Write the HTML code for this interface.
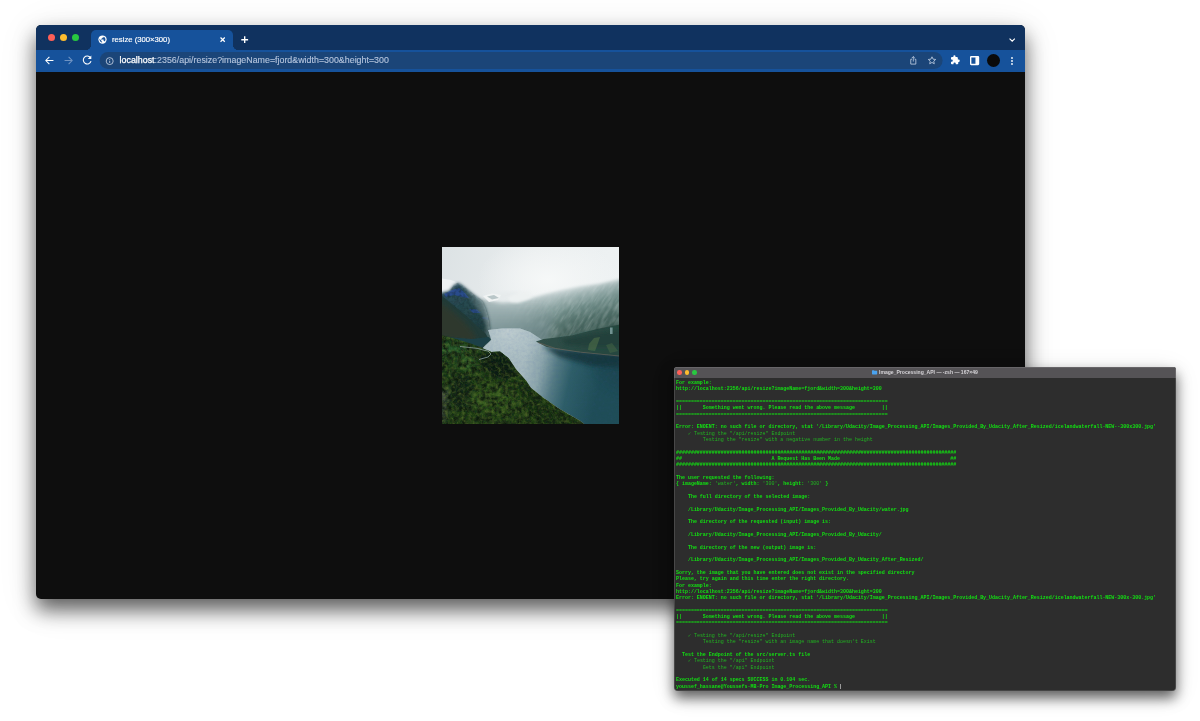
<!DOCTYPE html>
<html lang="en">
<head>
<meta charset="utf-8">
<title>resize (300×300)</title>
<style>
*{box-sizing:border-box;margin:0;padding:0}
html,body{width:1200px;height:721px;overflow:hidden;background:#fff}
body{position:relative;font-family:"Liberation Sans",sans-serif}
.browser{position:absolute;left:36px;top:25px;width:989px;height:573.5px;border-radius:5px;background:#0e0e0e;
 box-shadow:0 11px 20px rgba(0,0,0,.6),0 6px 40px rgba(0,0,0,.1)}
.clip{position:absolute;inset:0;border-radius:5px;overflow:hidden}
.tabbar{position:absolute;left:0;top:0;width:100%;height:24.5px;background:#10325f}
.toolbar{position:absolute;left:0;top:24.5px;width:100%;height:22.5px;background:#16529b}
.dot{position:absolute;top:9.3px;width:7px;height:7px;border-radius:50%}
.tab{position:absolute;left:55.2px;top:5.2px;width:141.4px;height:19.5px;background:#16529b;border-radius:5px 5px 0 0}
.tab:before,.tab:after{content:"";position:absolute;bottom:0;width:5px;height:5px;background:radial-gradient(circle at 0 0,rgba(22,82,155,0) 4.8px,#16529b 5.2px)}
.tab:before{left:-5px}
.tab:after{right:-5px;background:radial-gradient(circle at 100% 0,rgba(22,82,155,0) 4.8px,#16529b 5.2px)}
.ttitle{position:absolute;left:20.6px;top:5.9px;font-size:7.1px;line-height:9px;transform:scaleX(1.0845);transform-origin:0 0;color:#fff;white-space:nowrap;letter-spacing:0;-webkit-text-stroke:0.15px #fff}
.omni{position:absolute;left:63px;transform:translateX(0.6px);top:2.7px;width:843.3px;height:16.9px;border-radius:8.45px;background:#1b4578}
.url{position:absolute;left:20.2px;top:4.25px;font-size:8.2px;line-height:10px;transform:scaleX(1.0825);transform-origin:0 0;color:#b4c4dc;white-space:nowrap}
.url b{color:#fff;font-weight:normal;-webkit-text-stroke:0.25px #fff}
.url span{-webkit-text-stroke:0.12px #b4c4dc}
svg.ic{position:absolute;overflow:visible}
.photo{position:absolute;left:406px;top:222px;width:177px;height:177px;display:block}

.term{position:absolute;left:674px;top:367px;width:502px;height:323.5px;border-radius:2.5px 2.5px 4px 4px;background:#2d2d2d;
 box-shadow:0 7px 13px rgba(0,0,0,.6),0 4px 26px rgba(0,0,0,.1)}
.tclip:after{content:"";position:absolute;inset:0;border-radius:2.5px 2.5px 4px 4px;box-shadow:inset 0 0 0 0.6px rgba(255,255,255,.22);pointer-events:none}
.tclip{position:absolute;inset:0;border-radius:2.5px 2.5px 4px 4px;overflow:hidden}
.tbar{position:absolute;left:0;top:0;width:100%;height:10.5px;background:#555356}
.tdot{position:absolute;top:3px;width:4.6px;height:4.6px;border-radius:50%}
.ttl{position:absolute;left:205px;top:2.4px;font-size:5.07px;line-height:6px;font-weight:bold;color:#d6d4d8;white-space:nowrap}
.tbody{position:absolute;left:2.2px;top:12.9px;font-family:"Liberation Mono",monospace;font-size:4.975px;line-height:6.336px;color:#12e012;font-weight:bold}
.l{height:6.336px;white-space:pre}
.tbody,.ttl{will-change:transform}
.l.d{color:#21b321;font-weight:normal}
.l i{font-style:normal;color:#21b321;font-weight:normal}
.l b{font-weight:bold}
.l u{position:relative;text-decoration:none}
.l u:after{content:"";position:absolute;left:0.2px;top:-0.2px;width:0.7px;height:5.8px;background:#9a9a9a}
</style>
</head>
<body>
<div class="browser">
 <div class="clip">
  <div class="tabbar">
   <span class="dot" style="left:12.3px;background:#fe5f57"></span>
   <span class="dot" style="left:24.1px;background:#febc2e"></span>
   <span class="dot" style="left:35.9px;background:#28c840"></span>
   <div class="tab">
    <svg class="ic" style="left:6.5px;top:5.1px" width="9" height="9" viewBox="0 0 24 24"><circle cx="12" cy="12" r="11" fill="#fff"/><path fill="#16529b" d="M11 19.9c-3.9-.5-7-3.9-7-7.9 0-.6.1-1.2.2-1.8L9 15v1c0 1.1.9 2 2 2v1.9zM17.9 17.4c-.3-.8-1-1.4-1.9-1.4h-1v-3c0-.6-.4-1-1-1H8v-2h2c.6 0 1-.4 1-1V7h2c1.1 0 2-.9 2-2v-.4c2.9 1.2 5 4.1 5 7.4 0 2.1-.8 4-2.1 5.4z"/></svg>
    <div class="ttitle">resize (300×300)</div>
    <svg class="ic" style="left:128.900px;top:6.900px" width="5.300" height="5.300" viewBox="0 0 6 6"><path d="M0.6 0.6L5.4 5.4M5.4 0.6L0.6 5.4" stroke="#fff" stroke-width="1.4" fill="none"/></svg>
   </div>
   <svg class="ic" style="left:205px;top:11.2px" width="7.4" height="7.4" viewBox="0 0 8 8"><path d="M4 0.3V7.7M0.3 4H7.7" stroke="#fff" stroke-width="1.5" fill="none"/></svg>
   <svg class="ic" style="left:973px;top:13px" width="6.4" height="4" viewBox="0 0 8 5"><path d="M0.7 0.7L4 4L7.3 0.7" stroke="#fff" stroke-width="1.4" fill="none"/></svg>
  </div>
  <div class="toolbar">
   <svg class="ic" style="left:8.6px;top:6.9px" width="9" height="9" viewBox="0 0 16 16"><path d="M15 8H2M7.800 1.500L1.500 8L7.800 14.500" stroke="#fff" stroke-width="1.9" fill="none"/></svg>
   <svg class="ic" style="left:27.9px;top:6.9px" width="9" height="9" viewBox="0 0 16 16"><path d="M1 8H14M8.200 1.500L14.500 8L8.200 14.500" stroke="#6f93c3" stroke-width="1.9" fill="none"/></svg>
   <svg class="ic" style="left:45.6px;top:5.9px" width="10.2" height="10.2" viewBox="0 0 16 16"><path d="M13.3 4.2A6.2 6.2 0 1 0 14.2 9.6" stroke="#fff" stroke-width="1.700" fill="none"/><path d="M14.6 0.8V6.4H9z" fill="#fff"/></svg>
   <div class="omni">
    <svg class="ic" style="left:6.4px;top:4.35px" width="8.2" height="8.2" viewBox="0 0 16 16"><circle cx="8" cy="8" r="6.8" stroke="#d7e0ee" stroke-width="1.5" fill="none"/><path d="M8 7.2V11.6M8 4.3V5.9" stroke="#d7e0ee" stroke-width="1.6" fill="none"/></svg>
    <div class="url"><b>localhost</b><span>:2356/api/resize?imageName=fjord&amp;width=300&amp;height=300</span></div>
    <svg class="ic" style="left:810.3px;top:3.6px" width="7.4" height="8.8" viewBox="0 0 16 19"><path d="M5 7H2.5V17.5H13.5V7H11M8 12V1.5M4.6 4.6L8 1.2L11.4 4.6" stroke="#c9d6e8" stroke-width="1.7" fill="none"/></svg>
    <svg class="ic" style="left:828.4px;top:3.9px" width="8.8" height="8.4" viewBox="0 0 20 19"><path d="M10 1.8L12.5 7.2L18.4 7.8L14 11.8L15.2 17.6L10 14.6L4.8 17.6L6 11.8L1.6 7.8L7.5 7.2Z" stroke="#c9d6e8" stroke-width="1.8" fill="none" stroke-linejoin="round"/></svg>
   </div>
   <svg class="ic" style="left:915.1px;top:6.7px" width="9" height="9" viewBox="0 0 20 20"><path fill="#fff" d="M17.5 9.5H16V6c0-1.1-.9-2-2-2h-3.500V2.5a2.500 2.500 0 0 0-5 0V4H2C.9 4 0 4.900 0 6v3.800h1.500a2.700 2.700 0 0 1 0 5.400H0V19c0 1.100.9 2 2 2h3.800v-1.500a2.700 2.700 0 0 1 5.400 0V21H15c1.100 0 2-.9 2-2v-3.500h.5a3 3 0 0 0 0-6z" transform="translate(0,-1.5) scale(.95)"/></svg>
   <svg class="ic" style="left:933.9px;top:6.7px" width="9.2" height="9.2" viewBox="0 0 16 16"><rect x="1.200" y="1.200" width="13.600" height="13.600" rx="0.8" fill="none" stroke="#fff" stroke-width="2.4"/><rect x="9.500" y="2" width="5" height="12" fill="#fff"/></svg>
   <span style="position:absolute;left:950.7px;top:4.6px;width:13px;height:13px;border-radius:50%;background:#0a0a0a"></span>
   <svg class="ic" style="left:975.1px;top:7.2px" width="2" height="8" viewBox="0 0 2 8"><circle cx="1" cy="1" r="0.9" fill="#fff"/><circle cx="1" cy="4" r="0.9" fill="#fff"/><circle cx="1" cy="7" r="0.9" fill="#fff"/></svg>
  </div>
  <svg class="photo" viewBox="0 0 177 177" width="177" height="177">
<defs>
 <linearGradient id="sky" x1="0" y1="0" x2="1" y2="0.25"><stop offset="0" stop-color="#dce2e4"/><stop offset="0.5" stop-color="#e9edee"/><stop offset="1" stop-color="#eef2f3"/></linearGradient>
 <radialGradient id="skyglow" cx="0.6" cy="0.3" r="0.4"><stop offset="0" stop-color="#f6f8f8"/><stop offset="1" stop-color="#f6f8f8" stop-opacity="0"/></radialGradient>
 <linearGradient id="rmt" gradientUnits="userSpaceOnUse" x1="128" y1="36" x2="142" y2="90"><stop offset="0" stop-color="#e4eaeb"/><stop offset="0.1" stop-color="#ccd7d8"/><stop offset="0.26" stop-color="#97adac"/><stop offset="0.46" stop-color="#6e8b87"/><stop offset="0.7" stop-color="#4e6c66"/><stop offset="1" stop-color="#35534c"/></linearGradient>
 <linearGradient id="mist" gradientUnits="userSpaceOnUse" x1="44" y1="0" x2="125" y2="0"><stop offset="0" stop-color="#9fb2b4" stop-opacity="0.95"/><stop offset="0.4" stop-color="#a2b5b6" stop-opacity="0.7"/><stop offset="1" stop-color="#a2b5b6" stop-opacity="0"/></linearGradient>
 <linearGradient id="mdk" gradientUnits="userSpaceOnUse" x1="0" y1="56" x2="0" y2="84"><stop offset="0" stop-color="#6f888b" stop-opacity="0"/><stop offset="1" stop-color="#6a8487" stop-opacity="0.6"/></linearGradient>
 <linearGradient id="lmt" x1="0" y1="0" x2="0.5" y2="1"><stop offset="0" stop-color="#33566a"/><stop offset="0.4" stop-color="#294a52"/><stop offset="1" stop-color="#1f3d3e"/></linearGradient>
 <linearGradient id="lmist" gradientUnits="userSpaceOnUse" x1="28" y1="62" x2="50" y2="54"><stop offset="0" stop-color="#93a8ab" stop-opacity="0"/><stop offset="1" stop-color="#9db1b3" stop-opacity="0.95"/></linearGradient>
 <linearGradient id="water" gradientUnits="userSpaceOnUse" x1="85" y1="100" x2="162" y2="118"><stop offset="0" stop-color="#a7babf"/><stop offset="0.22" stop-color="#8da6ac"/><stop offset="0.42" stop-color="#547a83"/><stop offset="0.62" stop-color="#2e5e68"/><stop offset="1" stop-color="#1f4d57"/></linearGradient>
 <radialGradient id="wtop" gradientUnits="userSpaceOnUse" cx="66" cy="84" r="42" gradientTransform="translate(66 84) scale(1 0.85) translate(-66 -84)"><stop offset="0" stop-color="#bfcdd0" stop-opacity="0.98"/><stop offset="0.5" stop-color="#b5c6ca" stop-opacity="0.65"/><stop offset="1" stop-color="#b0c2c6" stop-opacity="0"/></radialGradient>
 <linearGradient id="pen" x1="0" y1="0" x2="1" y2="0.3"><stop offset="0" stop-color="#33514a"/><stop offset="1" stop-color="#25463f"/></linearGradient>
 <linearGradient id="fg" x1="0" y1="0" x2="0.6" y2="1"><stop offset="0" stop-color="#234623"/><stop offset="0.5" stop-color="#26431b"/><stop offset="1" stop-color="#2a461a"/></linearGradient>
 <filter id="b1" x="-10%" y="-10%" width="120%" height="120%"><feGaussianBlur stdDeviation="0.7"/></filter>
 <filter id="b15" x="-10%" y="-10%" width="120%" height="120%"><feGaussianBlur stdDeviation="1.4"/></filter>
 <filter id="b2" x="-20%" y="-20%" width="140%" height="140%"><feGaussianBlur stdDeviation="2.2"/></filter>
 <filter id="b4" x="-30%" y="-30%" width="160%" height="160%"><feGaussianBlur stdDeviation="5"/></filter>
 <filter id="tex" x="0" y="0" width="100%" height="100%">
  <feTurbulence type="fractalNoise" baseFrequency="0.2" numOctaves="3" seed="7" result="n"/>
  <feColorMatrix in="n" type="matrix" values="0 0 0 0 0  0 0 0 0 0  0 0 0 0 0  1.8 1.4 0 0 -1.12" result="a"/>
  <feComposite in="SourceGraphic" in2="a" operator="in"/>
 </filter>
 <filter id="tex2" x="0" y="0" width="100%" height="100%">
  <feTurbulence type="fractalNoise" baseFrequency="0.3" numOctaves="3" seed="23" result="n"/>
  <feColorMatrix in="n" type="matrix" values="0 0 0 0 0  0 0 0 0 0  0 0 0 0 0  1.6 1.2 0 0 -1.24" result="a"/>
  <feComposite in="SourceGraphic" in2="a" operator="in"/>
 </filter>
 <filter id="tex3" x="0" y="0" width="100%" height="100%">
  <feTurbulence type="fractalNoise" baseFrequency="0.09 0.35" numOctaves="2" seed="3" result="n"/>
  <feColorMatrix in="n" type="matrix" values="0 0 0 0 0  0 0 0 0 0  0 0 0 0 0  1.5 1.0 0 0 -1.0" result="a"/>
  <feComposite in="SourceGraphic" in2="a" operator="in"/>
 </filter>
 <filter id="tex4" x="0" y="0" width="100%" height="100%">
  <feTurbulence type="fractalNoise" baseFrequency="0.35" numOctaves="2" seed="11" result="n"/>
  <feColorMatrix in="n" type="matrix" values="0 0 0 0 0  0 0 0 0 0  0 0 0 0 0  1.4 1.2 0 0 -1.1" result="a"/>
  <feComposite in="SourceGraphic" in2="a" operator="in"/>
 </filter>
 <clipPath id="cp"><rect width="177" height="177"/></clipPath>
 <clipPath id="fgc"><path d="M-5 87 L14 92 L30 97 L40.700 101.300 L49.400 105 L58 104.400 L66.700 111.200 L74 122.300 L84 133.400 L89 141 L101 150.500 L116 161 L138.400 174 L143.300 178 L150 185 L-5 185Z"/></clipPath>
 <clipPath id="rmc"><path d="M200 26 L177 32.500 L157 37 L138 39.500 L120 43 L101 48 L89 52 L75 56 L60 59 L44 61 L44 110 L200 115Z"/></clipPath>
 <clipPath id="lmc"><path d="M-10 48 L7 44 L12 38 L16 35.800 L20 38 L31 47 L40.700 54.300 L44.500 64 L47 74 L48 84 L49.400 92.700 L40.700 101.300 L-10 92Z"/></clipPath>
 <clipPath id="wc"><path d="M46.200 83 L60 81.500 L78 81.500 L88 85 L101.600 93.700 L94 94.500 L104.800 100 L113.700 101.300 L138.400 105 L178 108.800 L178 178 L143.300 178 L138.400 174 L116 161 L101 150.500 L89 141 L84 133.400 L74 122.300 L66.700 111.200 L58 104.400 L49.400 105 L40.700 101.300 L49.400 92.700Z"/></clipPath>
</defs>
<g clip-path="url(#cp)">
 <rect width="177" height="177" fill="url(#sky)"/>
 <rect width="177" height="110" fill="url(#skyglow)"/>
 <!-- right mountain -->
 <path d="M200 26 L177 32.500 L157 37 L138 39.500 L120 43 L101 48 L89 52 L75 56 L60 59 L44 61 L44 110 L200 115Z" fill="url(#rmt)" filter="url(#b15)"/>
 <g clip-path="url(#rmc)" opacity="0.3">
  <g transform="rotate(-58 120 60)"><rect x="20" y="-40" width="220" height="220" fill="#dbe4e4" filter="url(#tex3)"/></g>
 </g>
 <path d="M40 52 L60 56 L89 52 L112 46 L135 46 L135 100 L40 100Z" fill="url(#mist)" filter="url(#b2)"/>
 <path d="M40 56 L70 58 L100 56 L112 70 L104 96 L40 96Z" fill="url(#mdk)" filter="url(#b2)"/>
 <ellipse cx="64" cy="49" rx="22" ry="4" fill="#e6ebec" filter="url(#b2)"/>
 <path d="M41 49 L50 46.500 L59 48 L56 53 L47 55Z" fill="#f1f4f4" filter="url(#b1)" opacity="0.95"/>
 <path d="M66 50 L78 45 L89 44 L89 51 L76 56 L68 55Z" fill="#eef2f2" filter="url(#b15)" opacity="0.9"/>
 <path d="M45 49.500 L52 48 L57 51 L50 52.500Z" fill="#a3b4b6" filter="url(#b1)" opacity="0.7"/>
 <!-- left snow peak -->
 <path d="M-10 30 L9 33 L16 35.800 L21 41 L10 47.500 L-10 53Z" fill="#eff2f3" filter="url(#b1)"/>
 <!-- left mountain -->
 <path d="M-10 48 L7 44 L12 38 L16 35.800 L20 38 L31 47 L40.700 54.300 L44.500 64 L47 74 L48 84 L49.400 92.700 L40.700 101.300 L-10 92Z" fill="url(#lmt)" filter="url(#b15)"/>
 <g clip-path="url(#lmc)">
  <path d="M2 47 L10 43 L17 41 L23 46 L27 51 L20 50 L12 48 L4 50Z" fill="#2a4cae" opacity="0.6" filter="url(#b1)"/>
  <path d="M27 62 L35 62.500 L39 66 L31 66Z" fill="#2a4cae" opacity="0.55" filter="url(#b1)"/>
  <path d="M40 70 L48 71 L49 73 L41 72Z" fill="#2a4cae" opacity="0.35" filter="url(#b1)"/>
  <rect x="0" y="34" width="56" height="70" fill="#14292c" filter="url(#tex4)" opacity="0.55"/>
  <path d="M14 32 L24 38 L34 46 L44 54 L51 64 L57 76 L58 90 L40 96 L44 80 L40 68 L30 56 L20 46Z" fill="url(#lmist)" filter="url(#b15)"/>
 </g>
 <!-- lower-left dark ridge -->
 <path d="M-10 46 L0 49 L10 57 L24.700 69 L34 78 L43 86 L47 92 L40.700 101.300 L-10 92Z" fill="#203b38" filter="url(#b1)"/>
 <path d="M-5 54 L8 62 L22 74 L32 86 L36 97 L-5 90Z" fill="#30392c" opacity="0.75" filter="url(#b2)"/>
 <path d="M4 90 L30 92 L47 90 L49 93 L40 100 L14 94Z" fill="#1b4146" filter="url(#b1)"/>
 <!-- water -->
 <g clip-path="url(#wc)">
  <rect x="40" y="80" width="140" height="100" fill="url(#water)"/>
  <rect x="20" y="40" width="100" height="90" fill="url(#wtop)"/>
  <path d="M100 99 L125 103 L155 106 L200 109 L200 124 L150 119 L118 110Z" fill="#12343b" opacity="0.85" filter="url(#b2)"/>
  <path d="M150 122 L200 116 L200 150 L170 140Z" fill="#1a454f" opacity="0.6" filter="url(#b4)"/>
  <rect x="40" y="80" width="140" height="100" fill="#3c56a8" filter="url(#tex4)" opacity="0.1"/>
 </g>
 <!-- right peninsula -->
 <path d="M94 94.500 L101.600 92 L114.300 90.500 L129.700 88.500 L155 82 L190 75 L190 110 L138.400 105 L113.700 101.300 L104.800 100Z" fill="url(#pen)" filter="url(#b1)"/>
 <path d="M118 93 L150 87 L200 80 L200 100 L150 100 L125 98Z" fill="#21413b" filter="url(#b2)"/>
 <path d="M147 97 L152 91 L158 90 L156 96 L153 104 L146 103Z" fill="#56764a" opacity="0.5" filter="url(#b1)"/>
 <path d="M164 98 L170 96 L176 104 L168 106Z" fill="#56764a" opacity="0.35" filter="url(#b1)"/>
 <path d="M96 95.500 L113.700 101.500 L138.400 105.200 L177 109" stroke="#6b6258" stroke-width="0.9" fill="none" opacity="0.75"/>
 <rect x="168" y="80.500" width="2.600" height="6.500" fill="#7fa0a0" opacity="0.85" filter="url(#b1)"/>
 <!-- foreground forest -->
 <path d="M-5 87 L14 92 L30 97 L40.700 101.300 L49.400 105 L58 104.400 L66.700 111.200 L74 122.300 L84 133.400 L89 141 L101 150.500 L116 161 L138.400 174 L143.300 178 L150 185 L-5 185Z" fill="url(#fg)"/>
 <g clip-path="url(#fgc)">
  <path d="M36 108 L52 105.500 L60 107 L69 116 L73 128 L62 133 L48 127 L39 118Z" fill="#0d1a14" filter="url(#b15)"/>
  <path d="M10 132 L24 128 L32 140 L30 160 L16 164 L8 150Z" fill="#16271a" filter="url(#b2)" opacity="0.9"/>
  <path d="M72 132 L84 138 L98 152 L112 164 L132 176 L100 185 L86 160Z" fill="#1a3418" filter="url(#b2)"/>
  <ellipse cx="50" cy="152" rx="24" ry="12" fill="#3a5f24" filter="url(#b4)"/>
  <ellipse cx="10" cy="102" rx="14" ry="6" fill="#2f6230" filter="url(#b2)"/>
  <ellipse cx="24" cy="116" rx="12" ry="7" fill="#35602a" filter="url(#b2)"/>
  <path d="M-6 142 L5 140 L8 152 L5 172 L-6 180Z" fill="#454b45" filter="url(#b2)" opacity="0.85"/>
  <rect x="0" y="86" width="150" height="92" fill="#0d1d0e" filter="url(#tex)"/>
  <rect x="0" y="86" width="150" height="92" fill="#60782c" filter="url(#tex2)" opacity="0.62"/>
 </g>
 <!-- road -->
 <path d="M18 99.500 L28 100.500 L36 101.500 L41 103 L46 104 L49 107 L46 110 L37 112.500" stroke="#8fa3a3" stroke-width="0.9" fill="none" opacity="0.85"/>
</g>
</svg>

 </div>
</div>

<div class="term">
 <div class="tclip">
  <div class="tbar">
   <span class="tdot" style="left:3.1px;background:#fe5f57"></span>
   <span class="tdot" style="left:10.7px;background:#febc2e"></span>
   <span class="tdot" style="left:18.4px;background:#28c840"></span>
   <svg class="ic" style="left:198px;top:2.8px" width="5.2" height="4.6" viewBox="0 0 11 9"><path d="M0 1.2C0 .5.5 0 1.200 0H4L5.200 1.200H9.800C10.500 1.200 11 1.700 11 2.400V7.800C11 8.500 10.500 9 9.800 9H1.200C.5 9 0 8.500 0 7.800Z" fill="#4aa3f0"/></svg>
   <div class="ttl">Image_Processing_API — -zsh — 167×49</div>
  </div>
  <div class="tbody">
<div class="l b">For example:</div>
<div class="l b">http://localhost:2356/api/resize?imageName=fjord&amp;width=300&amp;height=300</div>
<div class="l b"> </div>
<div class="l b">=======================================================================</div>
<div class="l b">||       Something went wrong. Please read the above message         ||</div>
<div class="l b">=======================================================================</div>
<div class="l b"> </div>
<div class="l b">Error: ENOENT: no such file or directory, stat '/Library/Udacity/Image_Processing_API/Images_Provided_By_Udacity_After_Resized/icelandwaterfall-NEW--300x300.jpg'</div>
<div class="l d">    <b>✓</b> Testing the "/api/resize" Endpoint</div>
<div class="l d">         Testing the "resize" with a negative number in the height</div>
<div class="l b"> </div>
<div class="l b">##############################################################################################</div>
<div class="l b">##                              A Request Has Been Made                                     ##</div>
<div class="l b">##############################################################################################</div>
<div class="l b"> </div>
<div class="l b">The user requested the following:</div>
<div class="l b">{ imageName: <i>'water'</i>, width: <i>'300'</i>, height: <i>'300'</i> }</div>
<div class="l b"> </div>
<div class="l b">    The full directory of the selected image:</div>
<div class="l b"> </div>
<div class="l b">    /Library/Udacity/Image_Processing_API/Images_Provided_By_Udacity/water.jpg</div>
<div class="l b"> </div>
<div class="l b">    The directory of the requested (input) image is:</div>
<div class="l b"> </div>
<div class="l b">    /Library/Udacity/Image_Processing_API/Images_Provided_By_Udacity/</div>
<div class="l b"> </div>
<div class="l b">    The directory of the new (output) image is:</div>
<div class="l b"> </div>
<div class="l b">    /Library/Udacity/Image_Processing_API/Images_Provided_By_Udacity_After_Resized/</div>
<div class="l b"> </div>
<div class="l b">Sorry, the image that you have entered does not exist in the specified directory</div>
<div class="l b">Please, try again and this time enter the right directory.</div>
<div class="l b">For example:</div>
<div class="l b">http://localhost:2356/api/resize?imageName=fjord&amp;width=300&amp;height=300</div>
<div class="l b">Error: ENOENT: no such file or directory, stat '/Library/Udacity/Image_Processing_API/Images_Provided_By_Udacity_After_Resized/icelandwaterfall-NEW-300x-300.jpg'</div>
<div class="l b"> </div>
<div class="l b">=======================================================================</div>
<div class="l b">||       Something went wrong. Please read the above message         ||</div>
<div class="l b">=======================================================================</div>
<div class="l b"> </div>
<div class="l d">    <b>✓</b> Testing the "/api/resize" Endpoint</div>
<div class="l d">         Testing the "resize" with an image name that doesn't Exist</div>
<div class="l b"> </div>
<div class="l b">  Test the Endpoint of the src/server.ts file</div>
<div class="l d">    <b>✓</b> Testing the "/api" Endpoint</div>
<div class="l d">         Gets the "/api" Endpoint</div>
<div class="l b"> </div>
<div class="l b">Executed 14 of 14 specs SUCCESS in 0.104 sec.</div>
<div class="l b">youssef_hassane@Youssefs-MB-Pro Image_Processing_API % <u></u></div>
  </div>
 </div>
</div>
</body>
</html>
